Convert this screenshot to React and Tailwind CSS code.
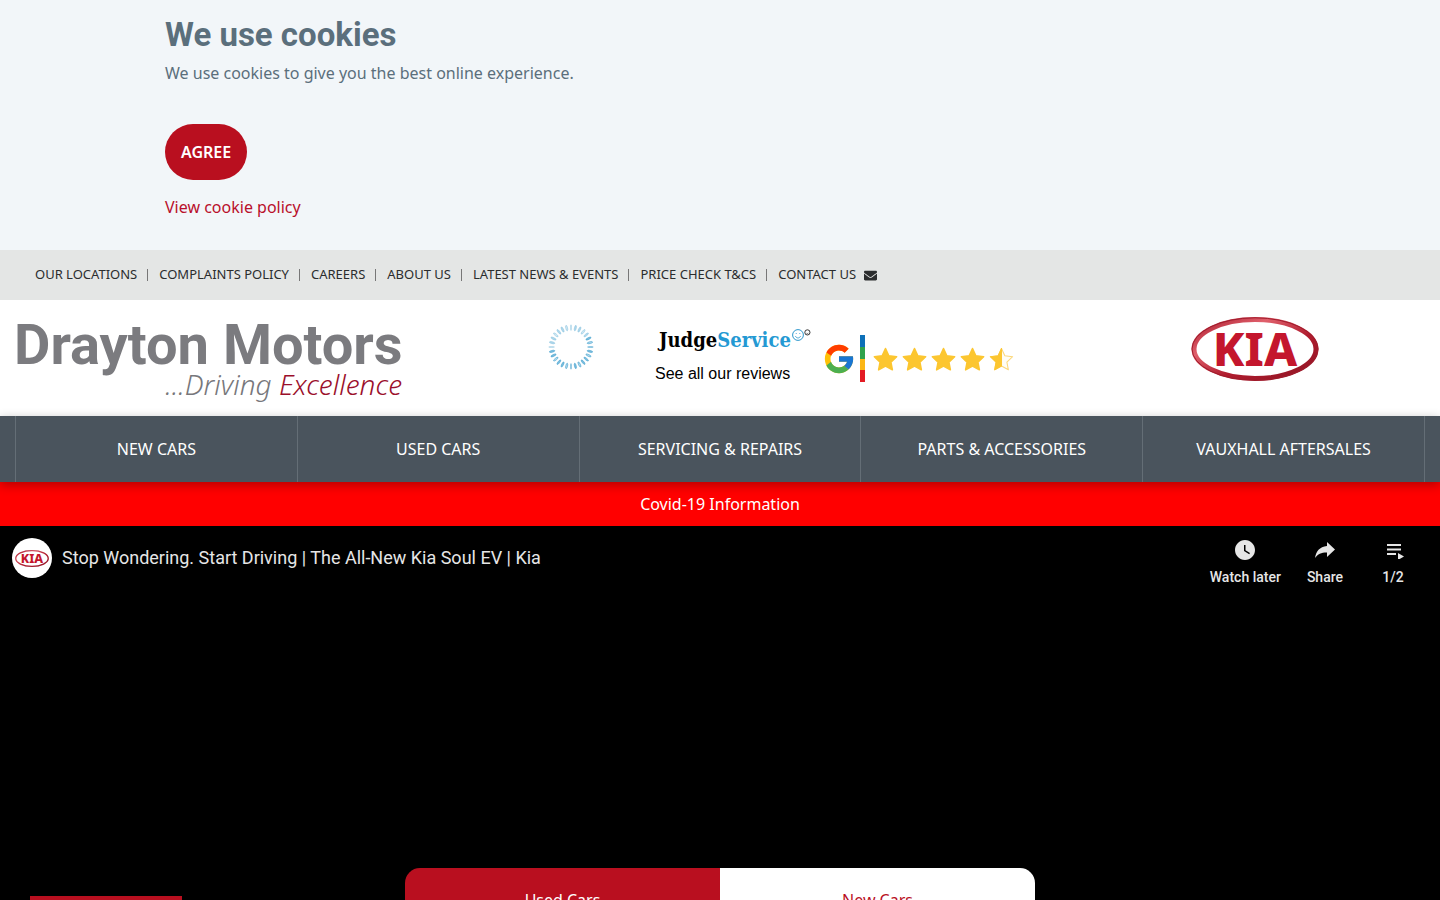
import { FcGoogle } from 'react-icons/fc'
import { FaEnvelope } from 'react-icons/fa'
import { MdWatchLater } from 'react-icons/md'

const topLinks = [
  'OUR LOCATIONS',
  'COMPLAINTS POLICY',
  'CAREERS',
  'ABOUT US',
  'LATEST NEWS & EVENTS',
  'PRICE CHECK T&CS',
  'CONTACT US',
]

const navLinks = ['NEW CARS', 'USED CARS', 'SERVICING & REPAIRS', 'PARTS & ACCESSORIES', 'VAUXHALL AFTERSALES']

const STAR = 'M12 1.5l3.2 6.9 7.5.9-5.5 5.2 1.4 7.4-6.6-3.6-6.6 3.6 1.4-7.4L1.3 9.3l7.5-.9z'

function Star({ half }) {
  return (
    <svg viewBox="0 0 24 24" className="h-[25px] w-[25px]" aria-hidden="true">
      {half ? (
        <>
          <path d={STAR} fill="#fffdf5" stroke="#fbd77a" strokeWidth="1" strokeLinejoin="round" />
          <path d="M12 1.5v16.8l-6.6 3.6 1.4-7.4L1.3 9.3l7.5-.9z" fill="#fcc630" stroke="#fcc630" strokeWidth="1" strokeLinejoin="round" />
        </>
      ) : (
        <path d={STAR} fill="#fcc630" stroke="#fcc630" strokeWidth="1.5" strokeLinejoin="round" />
      )}
    </svg>
  )
}

function KiaBadge({ className }) {
  return (
    <svg viewBox="0 0 128 64" className={className} role="img" aria-label="Kia">
      <defs>
        <linearGradient id="kiaRing" x1="0" y1="0" x2="1" y2="1">
          <stop offset="0" stopColor="#a8172a" />
          <stop offset="0.3" stopColor="#e0606c" />
          <stop offset="0.6" stopColor="#b01c2e" />
          <stop offset="1" stopColor="#8e1524" />
        </linearGradient>
      </defs>
      <ellipse cx="64" cy="32" rx="61" ry="29.5" fill="#fff" stroke="url(#kiaRing)" strokeWidth="5" />
      <ellipse cx="64" cy="32" rx="63" ry="31.2" fill="none" stroke="#a01c2c" strokeWidth="1" />
      <text
        x="64"
        y="49"
        textAnchor="middle"
        fill="#c4162d"
        fontSize="47"
        fontWeight="800"
        fontFamily="'Noto Sans', sans-serif"
      >
        KIA
      </text>
    </svg>
  )
}

function PetalRing() {
  const petals = Array.from({ length: 28 }, (_, i) => (i * 360) / 28)
  return (
    <svg viewBox="0 0 46 46" className="h-[46px] w-[46px]" aria-hidden="true">
      {petals.map((angle, i) => (
        <ellipse
          key={angle}
          cx="23"
          cy="3.6"
          rx={i % 7 === 0 ? 0.2 : 0.9}
          ry="2.8"
          fill={i % 3 === 0 ? '#b5dcee' : '#7dbfdf'}
          stroke="#48a3cf"
          strokeWidth="0.6"
          opacity={angle > 60 && angle < 260 ? 1 : 0.6}
          transform={`rotate(${angle} 23 23)`}
        />
      ))}
    </svg>
  )
}

function Smileys() {
  return (
    <svg viewBox="0 0 20 14" className="h-[14px] w-5 shrink-0" fill="none" aria-hidden="true">
      <circle cx="7" cy="7" r="5.4" stroke="#2b96cc" strokeWidth="1" />
      <path d="M4.4 8c1 2.6 4.2 2.6 5.2 0" stroke="#2b96cc" strokeWidth="0.8" />
      <circle cx="5.2" cy="5.6" r="0.5" fill="#2b96cc" />
      <circle cx="8.8" cy="5.6" r="0.5" fill="#2b96cc" />
      <circle cx="16.4" cy="4.4" r="2.6" stroke="#222" strokeWidth="0.9" />
      <path d="M15.2 4.8c.5 1 1.9 1 2.4 0" stroke="#222" strokeWidth="0.5" />
    </svg>
  )
}

function CookieNotice() {
  return (
    <section className="bg-[#f2f6f9] text-[#5b6f7c]">
      <div className="mx-auto h-[250px] max-w-[1110px] pt-3">
        <h2 className="font-[Roboto,sans-serif] text-[33px] leading-[46px] font-bold">We use cookies</h2>
        <p className="text-base leading-[30px]">We use cookies to give you the best online experience.</p>
        <button
          type="button"
          className="mt-9 block h-14 rounded-[28px] bg-[#b90f1f] px-4 text-base font-semibold text-white"
        >
          AGREE
        </button>
        <a href="#cookie-policy" className="mt-3 inline-block text-base leading-[30px] text-[#b90f2b]">
          View cookie policy
        </a>
      </div>
    </section>
  )
}

function TopBar() {
  return (
    <div className="flex h-[50px] items-center bg-[#e4e6e5] px-[35px] text-[13px] text-[#2b2d2e]">
      {topLinks.map((label, i) => (
        <div key={label} className="flex items-center">
          {i > 0 && <span className="mr-[11px] ml-[10px] h-3 w-px bg-[#777]" />}
          <a href="#page">{label}</a>
        </div>
      ))}
      <a href="#email" aria-label="Email us" className="ml-2">
        <FaEnvelope className="h-[13px] w-[13px]" />
      </a>
    </div>
  )
}

function Header() {
  return (
    <header className="grid h-[116px] grid-cols-[533px_492px_1fr] bg-white">
      <a href="#home" className="pt-3 pl-[14px]">
        <span className="block font-[Roboto,sans-serif] text-[56px] leading-[66px] font-bold whitespace-nowrap text-[#7b7b7f]">
          Drayton Motors
        </span>
        <span className="block w-[388px] text-right text-[28px] leading-3 font-light italic text-[#77777b]">
          ...Driving <span className="text-[#9b0f2b]">Excellence</span>
        </span>
      </a>
      <div className="flex">
        <div className="pt-6 pl-[15px]">
          <PetalRing />
        </div>
        <a href="#reviews" className="ml-[61px] w-[167px] pt-7 font-['Liberation_Sans',sans-serif] text-black">
          <span className="flex pl-1">
            <span className="font-['DejaVu_Serif_Condensed','DejaVu_Serif',serif] text-[20px] leading-6 font-bold">
              Judge<span className="text-[#2499d3]">Service</span>
            </span>
            <Smileys />
          </span>
          <span className="block pt-3 text-base leading-5">See all our reviews</span>
        </a>
        <FcGoogle className="mt-[42px] h-[34px] w-[34px]" />
        <div className="mt-[35px] ml-1 flex h-[47px] w-[5px] flex-col">
          <span className="flex-1 bg-[#0d70b8]" />
          <span className="flex-1 bg-[#2fa24c]" />
          <span className="flex-1 bg-[#fbb615]" />
          <span className="flex-1 bg-[#e31b23]" />
        </div>
        <div className="mt-[47px] ml-2 flex gap-1">
          <Star />
          <Star />
          <Star />
          <Star />
          <Star half />
        </div>
      </div>
      <div className="flex justify-center pt-[17px]">
        <KiaBadge className="ml-[45px] h-16 w-32" />
      </div>
    </header>
  )
}

function MainNav() {
  return (
    <nav className="relative z-10 bg-[#4a545d] px-[15px] shadow-[0_3px_10px_rgba(0,0,0,0.3)]">
      <ul className="grid h-[66px] grid-cols-5 border-l border-[#646e76]">
        {navLinks.map((label) => (
          <li key={label} className="border-r border-[#646e76]">
            <a href="#cars" className="flex h-full items-center justify-center text-base text-white">
              {label}
            </a>
          </li>
        ))}
      </ul>
    </nav>
  )
}

function VideoButton({ label, children }) {
  return (
    <button type="button" className="flex flex-col items-center text-sm leading-5 font-medium">
      <span className="flex h-6 items-center justify-center">{children}</span>
      <span className="pt-[5px]">{label}</span>
    </button>
  )
}

function Video() {
  return (
    <section className="flex h-[342px] items-start justify-between bg-black font-[Roboto,sans-serif] text-[#e6e6e6]">
      <div className="flex items-center pt-3 pl-3">
        <span className="flex h-10 w-10 items-center justify-center rounded-full bg-white">
          <KiaBadge className="h-[17px] w-[34px]" />
        </span>
        <a href="#video" className="ml-[10px] text-lg">
          Stop Wondering. Start Driving | The All-New Kia Soul EV | Kia
        </a>
      </div>
      <div className="flex pt-3 pr-9">
        <VideoButton label="Watch later">
          <MdWatchLater className="h-6 w-6" />
        </VideoButton>
        <div className="ml-[26px]">
          <VideoButton label="Share">
            <svg viewBox="0 0 20 18" className="h-[18px] w-5" fill="currentColor" aria-hidden="true">
              <path d="M12 1l8 7.5-8 7.5v-4.5C6.5 11.4 2.8 13 0 17 1 10.5 4.5 5.8 12 5z" />
            </svg>
          </VideoButton>
        </div>
        <div className="ml-[39px]">
          <VideoButton label="1/2">
            <svg viewBox="0 0 18 18" className="ml-1 h-[18px] w-[18px]" fill="currentColor" aria-hidden="true">
              <path d="M1 3h14v2H1zM1 7.5h14v2H1zM1 12h9v2H1zM12 12l6 3.500-6 3.500z" />
            </svg>
          </VideoButton>
        </div>
      </div>
    </section>
  )
}

function SearchTabs() {
  return (
    <section className="relative bg-black">
      <div className="mx-auto grid h-16 max-w-[630px] grid-cols-2 overflow-hidden rounded-t-[15px] text-base">
        <button type="button" className="bg-[#b90f1f] text-white">
          Used Cars
        </button>
        <button type="button" className="bg-white text-[#b90f1f]">
          New Cars
        </button>
      </div>
      <span className="absolute top-7 left-[30px] h-9 w-[152px] bg-[#b90f1f]" />
    </section>
  )
}

export default function App() {
  return (
    <div className="h-screen overflow-hidden bg-black font-['Noto_Sans',sans-serif]">
      <CookieNotice />
      <TopBar />
      <Header />
      <MainNav />
      <a href="#covid" className="block bg-[red] py-[10px] text-center text-base leading-6 text-white">
        Covid-19 Information
      </a>
      <Video />
      <SearchTabs />
    </div>
  )
}
